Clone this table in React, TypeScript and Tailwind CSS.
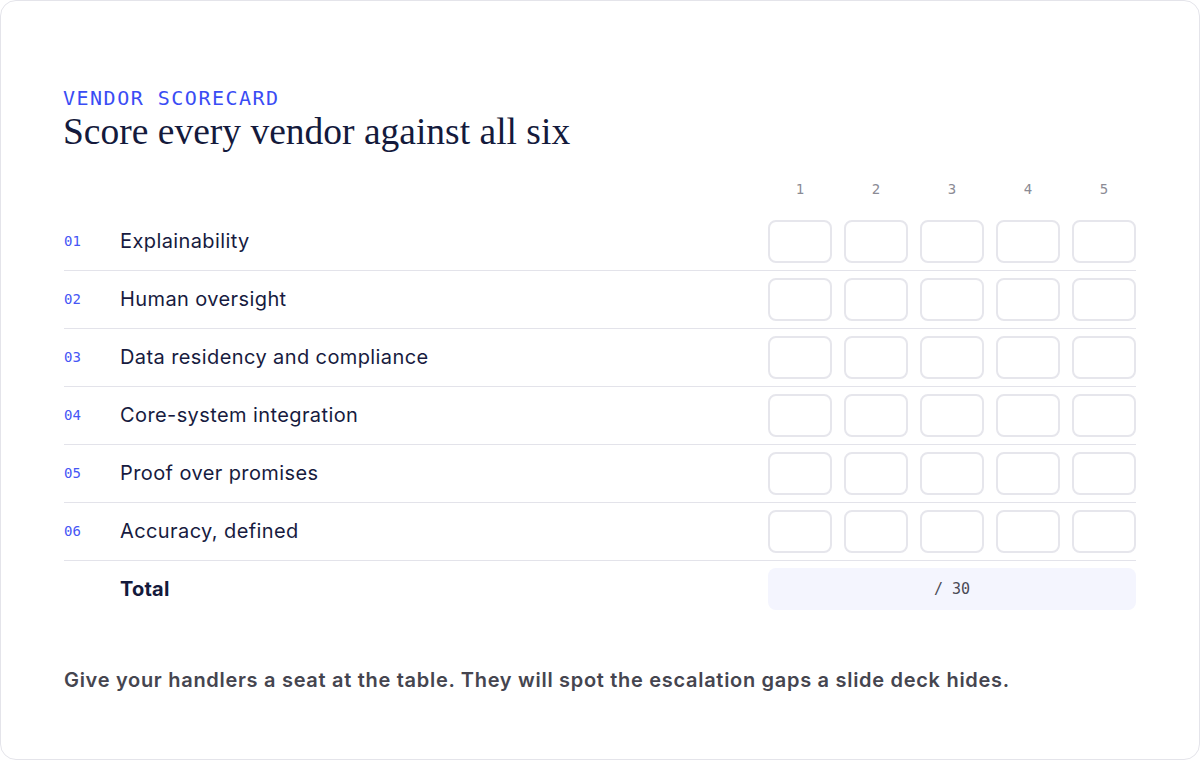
import React from "react";

const rows = [
  ["01", "Explainability"],
  ["02", "Human oversight"],
  ["03", "Data residency and compliance"],
  ["04", "Core-system integration"],
  ["05", "Proof over promises"],
  ["06", "Accuracy, defined"],
];

const mono = { fontFamily: '"DejaVu Sans Mono", "Liberation Mono", monospace' };

export default function App() {
  return (
    <div className="w-[1200px] h-[760px] bg-white" style={{ fontFamily: 'Inter, "Noto Sans", sans-serif' }}>
      <div className="w-full h-full border border-[#e4e4ea] rounded-[16px] px-[63px] pt-[85px]">
        <div className="ml-[-1px] text-[20px] leading-[24px] tracking-[0.075em] text-[#3a4cf4]" style={mono}>
          VENDOR SCORECARD
        </div>
        <h1
          className="ml-[-1px] text-[37.5px] leading-[44px] text-[#141a3c]"
          style={{ fontFamily: '"Liberation Serif", "DejaVu Serif", serif' }}
        >
          Score every vendor against all six
        </h1>

        <div className="mt-[25px] flex">
          <div className="flex-1" />
          <div className="flex gap-[12px]">
            {[1, 2, 3, 4, 5].map((n) => (
              <div key={n} className="w-[64px] text-center text-[14px] leading-[20px] text-[#8b8b95]" style={mono}>
                {n}
              </div>
            ))}
          </div>
        </div>

        <div className="mt-[14px]">
          {rows.map(([num, label]) => (
            <div key={num} className="flex items-center pt-[7px] pb-[7px] border-b border-[#e3e3ea]">
              <div className="w-[56px] text-[14px] text-[#4656f5] mb-[1px]" style={mono}>
                {num}
              </div>
              <div className="flex-1 text-[20px] tracking-[0.02em] text-[#171b40] mb-[2px]">{label}</div>
              <div className="flex gap-[12px]">
                {[1, 2, 3, 4, 5].map((n) => (
                  <div key={n} className="w-[64px] h-[43px] rounded-[8px] border-2 border-[#e6e6ec]" />
                ))}
              </div>
            </div>
          ))}
          <div className="flex items-center pt-[7px]">
            <div className="w-[56px]" />
            <div className="flex-1 text-[20px] font-bold tracking-[0.01em] text-[#141a3c]">Total</div>
            <div className="w-[368px] h-[42px] rounded-[8px] bg-[#f4f5fe] flex items-center justify-center text-[15px] text-[#4a4a55]" style={mono}>
              / 30
            </div>
          </div>
        </div>

        <p className="mt-[56px] text-[20px] leading-[28px] font-semibold tracking-[0.035em] text-[#45454f]">
          Give your handlers a seat at the table. They will spot the escalation gaps a slide deck hides.
        </p>
      </div>
    </div>
  );
}
